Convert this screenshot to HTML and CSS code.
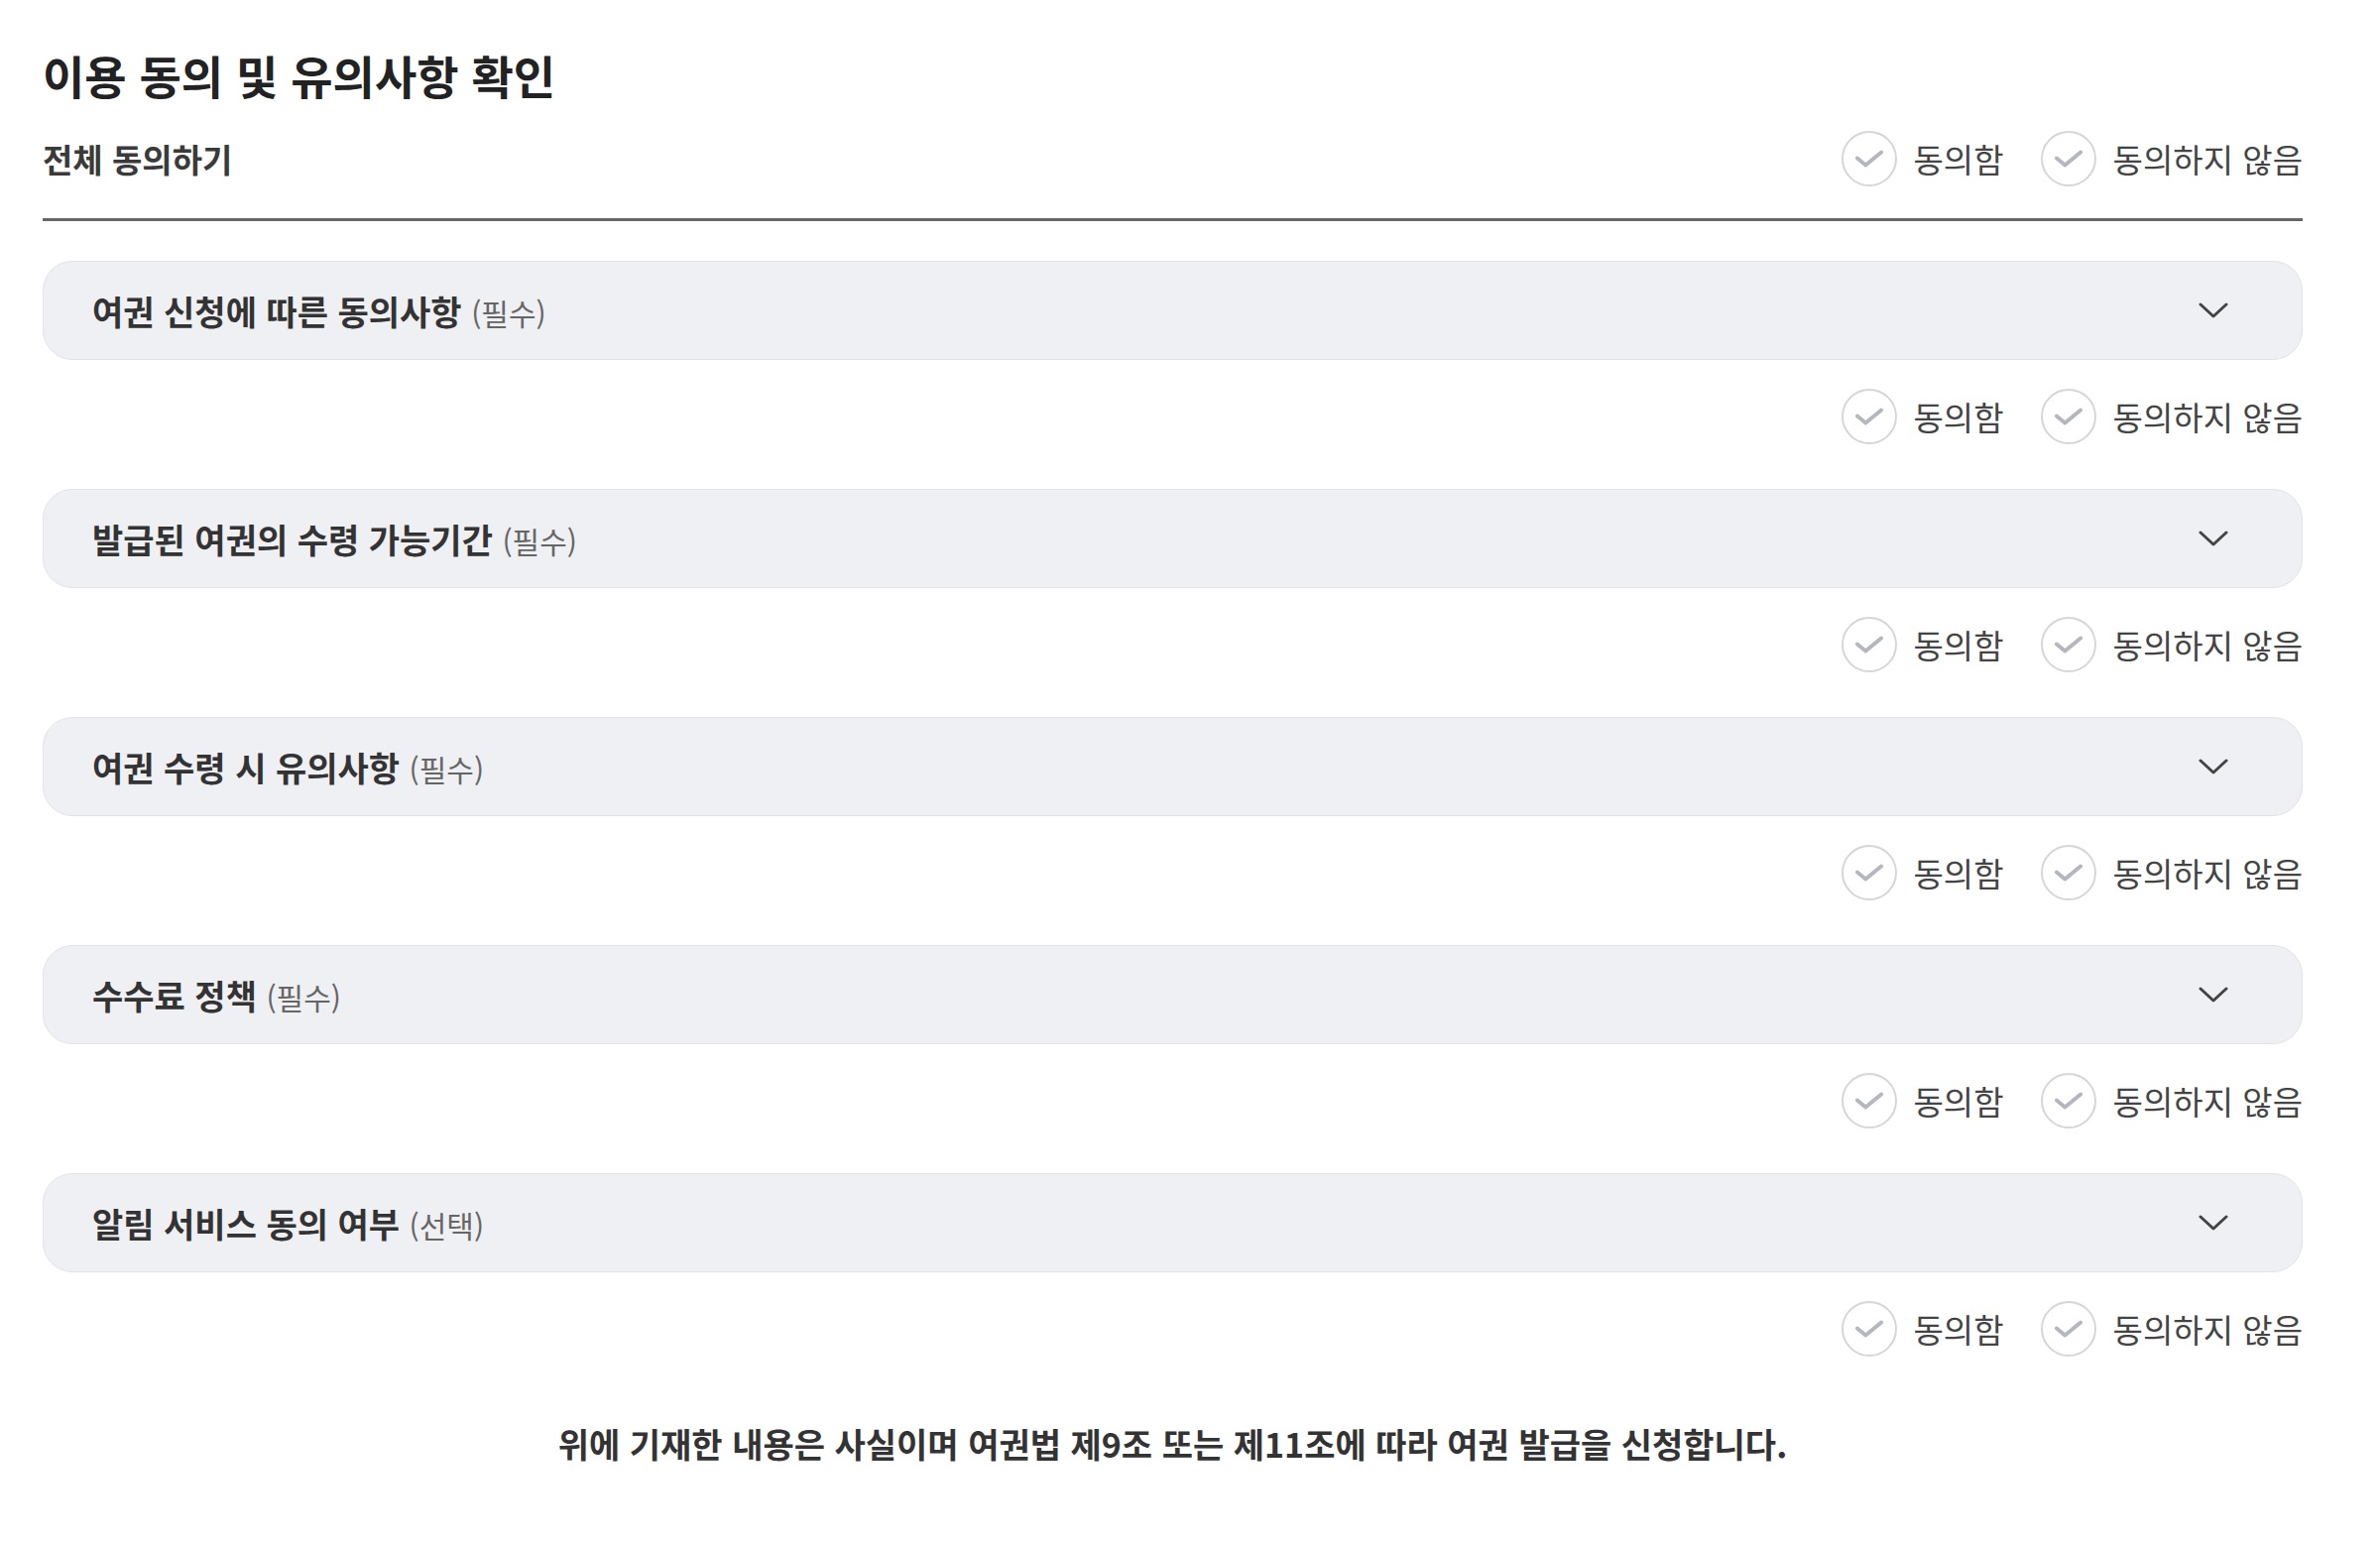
FILE: index.html
```html
<!DOCTYPE html>
<html lang="ko">
<head>
	<meta charset="UTF-8">
	<title>이용 동의 및 유의사항 확인</title>
	<link rel="stylesheet" href="styles.css">
</head>
<body>
	<div class="wrap">
		<h2 class="title">이용 동의 및 유의사항 확인</h2>

		<div class="all-row">
			<span class="all-label">전체 동의하기</span>
			<div class="choices">
				<label class="choice"><span class="circle"><svg viewBox="0 0 24 24"><polyline points="6.4,11.8 10.3,15 17.6,9"/></svg></span>동의함</label>
				<label class="choice"><span class="circle"><svg viewBox="0 0 24 24"><polyline points="6.4,11.8 10.3,15 17.6,9"/></svg></span>동의하지 않음</label>
			</div>
		</div>

		<div class="item">
			<div class="acc">
				<span class="acc-title">여권 신청에 따른 동의사항 <em>(필수)</em></span>
				<svg class="chev" viewBox="0 0 30 16"><polyline points="2,2 15,14 28,2"/></svg>
			</div>
			<div class="choices">
				<label class="choice"><span class="circle"><svg viewBox="0 0 24 24"><polyline points="6.4,11.8 10.3,15 17.6,9"/></svg></span>동의함</label>
				<label class="choice"><span class="circle"><svg viewBox="0 0 24 24"><polyline points="6.4,11.8 10.3,15 17.6,9"/></svg></span>동의하지 않음</label>
			</div>
		</div>

		<div class="item">
			<div class="acc">
				<span class="acc-title">발급된 여권의 수령 가능기간 <em>(필수)</em></span>
				<svg class="chev" viewBox="0 0 30 16"><polyline points="2,2 15,14 28,2"/></svg>
			</div>
			<div class="choices">
				<label class="choice"><span class="circle"><svg viewBox="0 0 24 24"><polyline points="6.4,11.8 10.3,15 17.6,9"/></svg></span>동의함</label>
				<label class="choice"><span class="circle"><svg viewBox="0 0 24 24"><polyline points="6.4,11.8 10.3,15 17.6,9"/></svg></span>동의하지 않음</label>
			</div>
		</div>

		<div class="item">
			<div class="acc">
				<span class="acc-title">여권 수령 시 유의사항 <em>(필수)</em></span>
				<svg class="chev" viewBox="0 0 30 16"><polyline points="2,2 15,14 28,2"/></svg>
			</div>
			<div class="choices">
				<label class="choice"><span class="circle"><svg viewBox="0 0 24 24"><polyline points="6.4,11.8 10.3,15 17.6,9"/></svg></span>동의함</label>
				<label class="choice"><span class="circle"><svg viewBox="0 0 24 24"><polyline points="6.4,11.8 10.3,15 17.6,9"/></svg></span>동의하지 않음</label>
			</div>
		</div>

		<div class="item">
			<div class="acc">
				<span class="acc-title">수수료 정책 <em>(필수)</em></span>
				<svg class="chev" viewBox="0 0 30 16"><polyline points="2,2 15,14 28,2"/></svg>
			</div>
			<div class="choices">
				<label class="choice"><span class="circle"><svg viewBox="0 0 24 24"><polyline points="6.4,11.8 10.3,15 17.6,9"/></svg></span>동의함</label>
				<label class="choice"><span class="circle"><svg viewBox="0 0 24 24"><polyline points="6.4,11.8 10.3,15 17.6,9"/></svg></span>동의하지 않음</label>
			</div>
		</div>

		<div class="item">
			<div class="acc">
				<span class="acc-title">알림 서비스 동의 여부 <em>(선택)</em></span>
				<svg class="chev" viewBox="0 0 30 16"><polyline points="2,2 15,14 28,2"/></svg>
			</div>
			<div class="choices">
				<label class="choice"><span class="circle"><svg viewBox="0 0 24 24"><polyline points="6.4,11.8 10.3,15 17.6,9"/></svg></span>동의함</label>
				<label class="choice"><span class="circle"><svg viewBox="0 0 24 24"><polyline points="6.4,11.8 10.3,15 17.6,9"/></svg></span>동의하지 않음</label>
			</div>
		</div>

		<p class="notice">위에 기재한 내용은 사실이며 여권법 제9조 또는 제11조에 따라 여권 발급을 신청합니다.</p>
	</div>
</body>
</html>
```

FILE: styles.css
```css
body{
	margin: 0;
	background: #fff;
	font-family: "Noto Sans CJK KR", "Noto Sans", sans-serif;
	color: #333;
}
.wrap{
	padding: 0 78px 0 43px;
}
.title{
	margin: 45px 0 0;
	font-size: 46px;
	line-height: 60px;
	font-weight: 700;
	color: #222;
}

/* 전체 동의 */
.all-row{
	display: flex;
	align-items: center;
	justify-content: space-between;
	margin-top: 27px;
	padding-bottom: 32px;
	border-bottom: 3px solid #666;
}
.all-label{
	font-size: 33px;
	font-weight: 700;
	color: #3a3a3a;
}

/* 동의 선택 */
.choices{
	display: flex;
	justify-content: flex-end;
	align-items: center;
	gap: 37px;
}
.choice{
	display: flex;
	align-items: center;
	gap: 17px;
	font-size: 33px;
	color: #444;
	height: 56px;
}
.circle{
	box-sizing: border-box;
	width: 56px;
	height: 56px;
	border: 2px solid #d6d6da;
	border-radius: 50%;
	background: #fff;
	display: flex;
	align-items: center;
	justify-content: center;
}
.circle svg{
	width: 56px;
	height: 56px;
	fill: none;
	stroke: #b4b6c0;
	stroke-width: 1.8;
	stroke-linecap: round;
	stroke-linejoin: round;
}

/* 아코디언 */
.item{
	margin-top: 40px;
}
.item + .item{
	margin-top: 45px;
}
.acc{
	box-sizing: border-box;
	height: 100px;
	display: flex;
	align-items: center;
	justify-content: space-between;
	padding: 0 74px 0 49px;
	background: #eff0f4;
	border: 1px solid #e2e3e8;
	border-radius: 30px;
}
.acc-title{
	font-size: 34px;
	font-weight: 700;
	color: #333;
}
.acc-title em{
	font-style: normal;
	font-weight: 400;
	font-size: 30px;
	color: #666;
}
.chev{
	width: 30px;
	height: 16px;
	fill: none;
	stroke: #444;
	stroke-width: 3;
	stroke-linecap: round;
	stroke-linejoin: round;
}
.item .choices{
	margin-top: 29px;
}

.notice{
	margin: 64px 0 0;
	text-align: center;
	font-size: 34px;
	line-height: 48px;
	font-weight: 700;
	color: #333;
}
```
